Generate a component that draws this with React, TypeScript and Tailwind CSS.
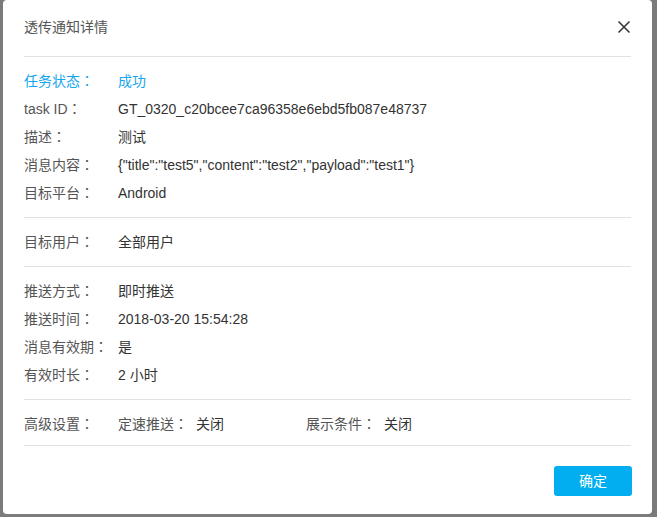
import React from "react";

const FONT = { fontFamily: '"Liberation Sans", "Noto Sans CJK SC", sans-serif' };
const COLON_FONT = { fontFamily: '"Noto Sans CJK TC", sans-serif' };

type Row = { label: string; value: string; accent?: boolean };

const sections: Row[][] = [
  [
    { label: "任务状态", value: "成功", accent: true },
    { label: "task ID", value: "GT_0320_c20bcee7ca96358e6ebd5fb087e48737" },
    { label: "描述", value: "测试" },
    { label: "消息内容", value: '{"title":"test5","content":"test2","payload":"test1"}' },
    { label: "目标平台", value: "Android" },
  ],
  [{ label: "目标用户", value: "全部用户" }],
  [
    { label: "推送方式", value: "即时推送" },
    { label: "推送时间", value: "2018-03-20 15:54:28" },
    { label: "消息有效期", value: "是" },
    { label: "有效时长", value: "2 小时" },
  ],
];

function Label({ text }: { text: string }) {
  return (
    <>
      {text}
      <span style={COLON_FONT}>：</span>
    </>
  );
}

function InfoRow({ row }: { row: Row }) {
  return (
    <div className="flex items-center h-[28px]">
      <span className={`w-[94px] shrink-0 ${row.accent ? "text-[#14a6ee]" : "text-[#555]"}`}>
        <Label text={row.label} />
      </span>
      <span className={row.accent ? "text-[#14a6ee]" : "text-[#333]"}>{row.value}</span>
    </div>
  );
}

export default function App() {
  return (
    <div className="h-[517px] w-[657px] bg-[#7b7b7b] pl-[3px] overflow-hidden" style={FONT}>
      <div className="w-[649px] h-[514px] bg-white rounded-[4px] px-[21px] flex flex-col text-[14px]">
        {/* header */}
        <div className="h-[57px] flex items-center justify-between border-b border-[#e2e2e2] pb-[2px]">
          <span className="text-[14px] text-[#555]">透传通知详情</span>
          <svg width="14" height="14" viewBox="0 0 14 14">
            <path d="M1.5 1.5 L12.5 12.5 M12.5 1.5 L1.5 12.5" stroke="#333" strokeWidth="1.5" fill="none" />
          </svg>
        </div>

        {sections.map((rows, i) => (
          <div key={i} className="py-[10px] border-b border-[#e2e2e2]">
            {rows.map((r) => (
              <InfoRow key={r.label} row={r} />
            ))}
          </div>
        ))}

        <div className="pt-[10px] pb-[7px] border-b border-[#e2e2e2]">
          <div className="flex items-center h-[28px]">
            <span className="w-[94px] shrink-0 text-[#555]"><Label text="高级设置" /></span>
            <span className="w-[78px] shrink-0 text-[#555]"><Label text="定速推送" /></span>
            <span className="w-[110px] shrink-0 text-[#333]">关闭</span>
            <span className="w-[78px] shrink-0 text-[#555]"><Label text="展示条件" /></span>
            <span className="text-[#333]">关闭</span>
          </div>
        </div>

        <div className="flex justify-end pt-[20px]">
          <button className="w-[78px] h-[30px] rounded-[3px] bg-[#02aef0] text-white text-[14px] mr-[-1px]">确定</button>
        </div>
      </div>
    </div>
  );
}
